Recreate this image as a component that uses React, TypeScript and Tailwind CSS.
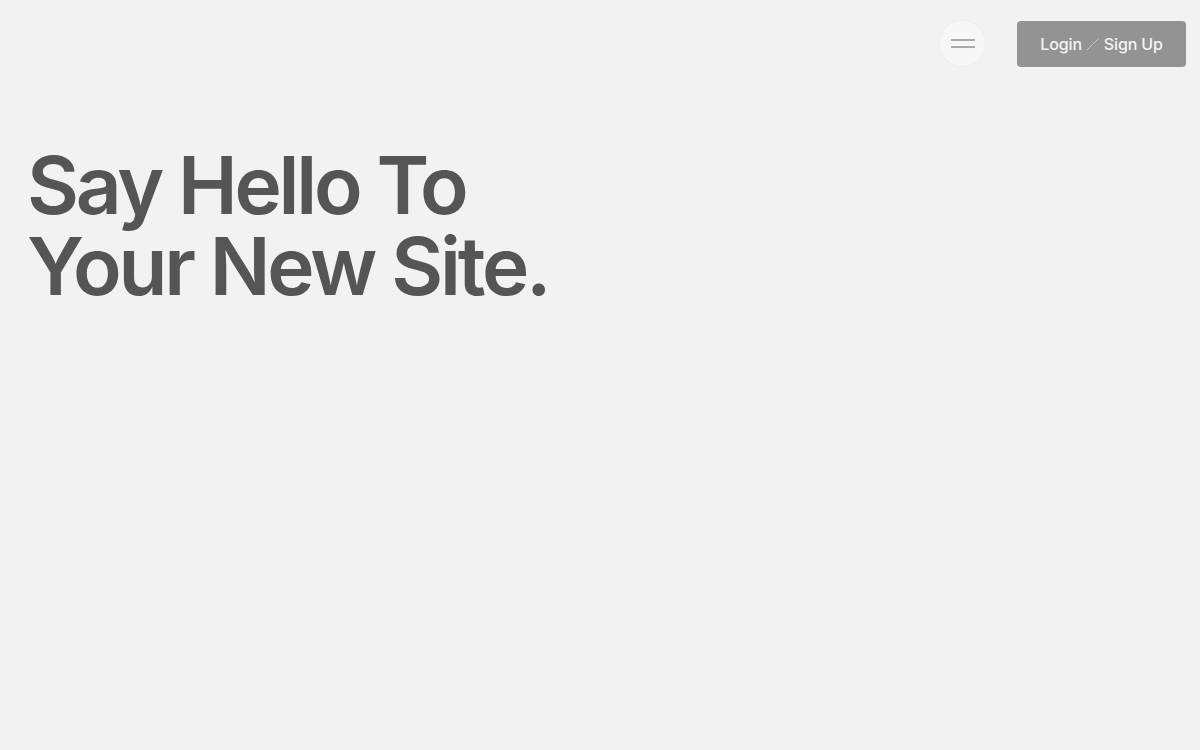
import React from "react";

export default function App() {
  return (
    <div className="min-h-[750px] w-full bg-[#f2f2f2]" style={{ fontFamily: "Inter, 'Noto Sans', sans-serif" }}>
      <header className="flex items-center justify-end pt-[20px] pr-[14px]">
        <button className="flex h-[47px] w-[47px] flex-col items-center justify-center gap-[5px] rounded-full border border-[#eeeeee] bg-[#f7f7f7]">
          <span className="block h-[2px] w-[24px] bg-[#ababab]" />
          <span className="block h-[2px] w-[24px] bg-[#ababab]" />
        </button>
        <button className="ml-[31px] flex h-[46px] w-[169px] items-center justify-center gap-[4px] rounded-[4px] bg-[#939393] text-[16px] font-medium tracking-[-0.01em] text-[#f4f4f4]">
          <span>Login</span>
          <svg width="14" height="14" viewBox="0 0 14 14">
            <line x1="1" y1="13" x2="13" y2="1" stroke="#c4c4c4" strokeWidth="1" />
          </svg>
          <span>Sign Up</span>
        </button>
      </header>
      <main className="pl-[27px] pt-[77px]">
        <h1 className="text-[80px] font-semibold leading-[81px] tracking-[-0.04em] text-[#555555]">
          Say Hello To
          <br />
          Your New Site.
        </h1>
      </main>
    </div>
  );
}
